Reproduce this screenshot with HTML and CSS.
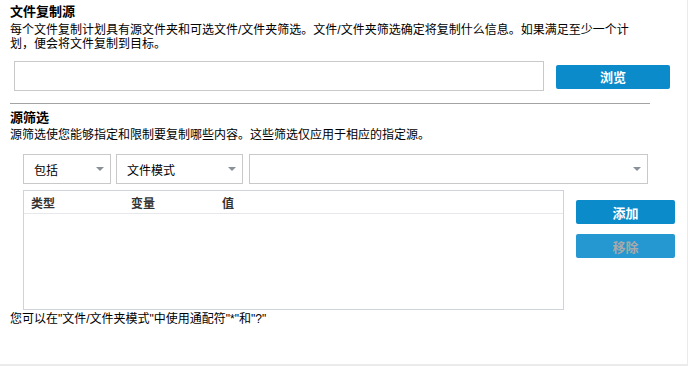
FILE: index.html
```html
<!DOCTYPE html>
<html lang="zh-CN">
<head>
  <meta charset="UTF-8" />
  <title>文件复制源</title>
  <link rel="stylesheet" href="styles.css">
</head>
<body>
  <div class="page">
    <h2 class="section-title">文件复制源</h2>
    <p class="desc desc-wide">每个文件复制计划具有源文件夹和可选文件/文件夹筛选。文件/文件夹筛选确定将复制什么信息。如果满足至少一个计划，便会将文件复制到目标。</p>

    <div class="source-row">
      <input type="text" class="source-input">
      <button class="btn browse-btn">浏览</button>
    </div>

    <hr class="divider">

    <h2 class="section-title filter-title">源筛选</h2>
    <p class="desc filter-desc">源筛选使您能够指定和限制要复制哪些内容。这些筛选仅应用于相应的指定源。</p>

    <div class="filter-row">
      <div class="dropdown dd-mode"><span>包括</span><i class="arrow"></i></div>
      <div class="dropdown dd-type"><span>文件模式</span><i class="arrow"></i></div>
      <div class="dropdown dd-value"><span></span><i class="arrow"></i></div>
    </div>

    <div class="list-row">
      <div class="filter-table">
        <div class="table-head">
          <span class="col-type">类型</span>
          <span class="col-var">变量</span>
          <span class="col-val">值</span>
        </div>
      </div>
      <div class="list-actions">
        <button class="btn">添加</button>
        <button class="btn btn-disabled">移除</button>
      </div>
    </div>

    <p class="desc hint">您可以在"文件/文件夹模式"中使用通配符"*"和"?"</p>
  </div>
</body>
</html>
```

FILE: styles.css
```css
body {
  margin: 0;
  background: #ebebeb;
  font-family: "Liberation Sans", "Noto Sans CJK SC", sans-serif;
  color: #000;
}
.page {
  width: 687px;
  height: 364px;
  box-sizing: border-box;
  background: #fff;
  padding: 4px 10px 0 10px;
  overflow: hidden;
}
.section-title {
  margin: 0;
  font-size: 13px;
  line-height: 16px;
  font-weight: bold;
}
.desc {
  margin: 3px 0 0 0;
  font-size: 12px;
  line-height: 14px;
}
.desc-wide {
  width: 625px;
}
.filter-desc {
  margin-top: 2px;
}
.source-row {
  display: flex;
  align-items: center;
  gap: 12px;
  margin-top: 10px;
  padding-left: 4px;
}
.source-input {
  width: 530px;
  height: 30px;
  box-sizing: border-box;
  border: 1px solid #c9c9c9;
  margin: 0;
  padding: 0 6px;
  outline: none;
}
.btn {
  display: block;
  height: 24px;
  border: none;
  border-radius: 2px;
  background: #0b8bc9;
  color: #fff;
  font-family: "Noto Sans CJK SC", sans-serif;
  font-size: 13px;
  font-weight: bold;
  padding: 0;
  cursor: pointer;
}
.browse-btn {
  width: 114px;
  margin-top: 1px;
}
.btn-disabled {
  background: #2597d1;
  color: #a9a9a9;
}
.divider {
  width: 640px;
  margin: 12px 0 0 0;
  border: none;
  border-top: 1px solid #a3a3a3;
  height: 0;
}
.filter-title {
  margin-top: 6px;
}
.filter-row {
  display: flex;
  gap: 5px;
  margin-top: 12px;
  padding-left: 13px;
}
.dropdown {
  height: 30px;
  box-sizing: border-box;
  border: 1px solid #c9c9c9;
  display: flex;
  align-items: center;
  justify-content: space-between;
  padding: 0 6px 0 10px;
  font-size: 12px;
}
.dd-mode { width: 88px; }
.dd-type { width: 127px; }
.dd-value { width: 399px; margin-left: 1px; }
.arrow {
  width: 0;
  height: 0;
  border-left: 4px solid transparent;
  border-right: 4px solid transparent;
  border-top: 4px solid #8a9097;
}
.list-row {
  display: flex;
  gap: 12px;
  margin-top: 6px;
  padding-left: 13px;
}
.filter-table {
  width: 541px;
  height: 120px;
  box-sizing: border-box;
  border: 1px solid #cfd4dc;
}
.table-head {
  display: flex;
  height: 22px;
  align-items: center;
  border-bottom: 1px solid #e6e8ec;
  padding-left: 7px;
  font-size: 12px;
  font-weight: bold;
  color: #333;
}
.col-type { width: 100px; }
.col-var { width: 91px; }
.list-actions {
  display: flex;
  flex-direction: column;
  gap: 10px;
  padding-top: 10px;
}
.list-actions .btn {
  width: 99px;
}
.hint {
  margin-top: 2px;
}
```
